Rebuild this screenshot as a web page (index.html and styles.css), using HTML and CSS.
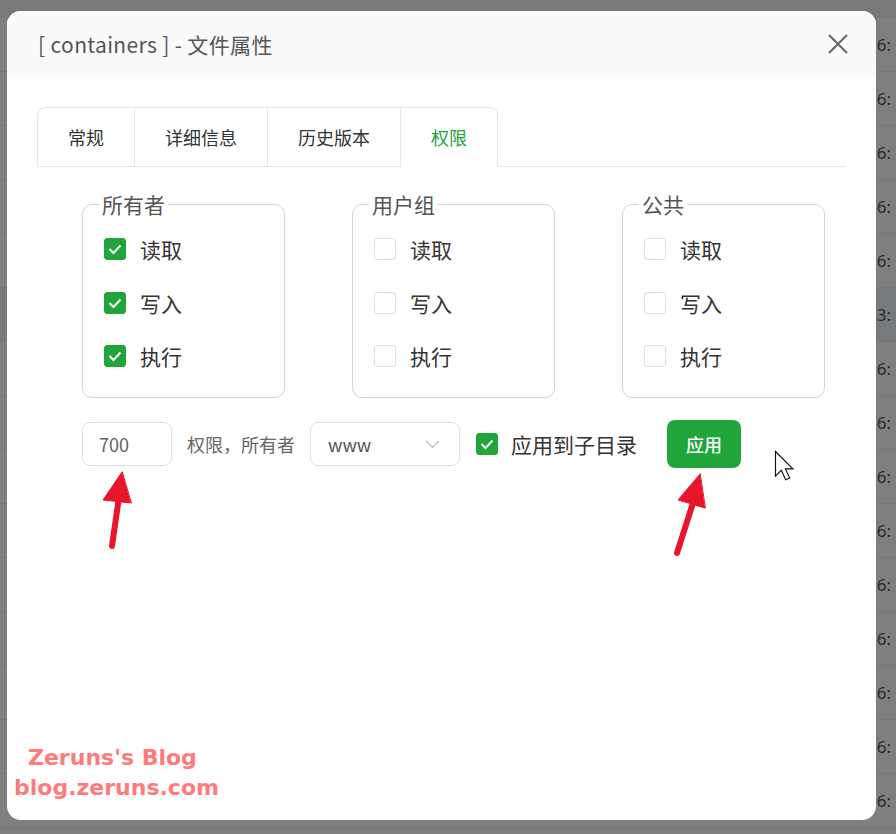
FILE: index.html
```html
<!DOCTYPE html>
<html lang="zh-CN">
<head>
<meta charset="utf-8">
<title>文件属性</title>
<link rel="stylesheet" href="styles.css">
</head>
<body>
<div class="bg-table">
  <div class="bg-row bg-head"></div>
  <div class="bg-row"><span class="bg-time">56:</span></div>
  <div class="bg-row"><span class="bg-time">56:</span></div>
  <div class="bg-row"><span class="bg-time">56:</span></div>
  <div class="bg-row"><span class="bg-time">56:</span></div>
  <div class="bg-row"><span class="bg-time">56:</span></div>
  <div class="bg-row bg-hover"><span class="bg-time">43:</span></div>
  <div class="bg-row"><span class="bg-time">56:</span></div>
  <div class="bg-row"><span class="bg-time">56:</span></div>
  <div class="bg-row"><span class="bg-time">56:</span></div>
  <div class="bg-row"><span class="bg-time">56:</span></div>
  <div class="bg-row"><span class="bg-time">56:</span></div>
  <div class="bg-row"><span class="bg-time">56:</span></div>
  <div class="bg-row"><span class="bg-time">56:</span></div>
  <div class="bg-row"><span class="bg-time">56:</span></div>
  <div class="bg-row"><span class="bg-time">56:</span></div>
</div>
<div class="mask"></div>

<div class="dialog">
  <div class="dlg-head">
    <span class="dlg-title">[ containers ] - 文件属性</span>
    <span class="dlg-close">
      <svg width="20" height="20" viewBox="0 0 20 20"><path d="M1 1 L19 19 M19 1 L1 19" stroke="#666" stroke-width="2" fill="none"/></svg>
    </span>
  </div>
  <div class="dlg-body">
    <div class="tabs">
      <div class="tab-list">
        <div class="tab">常规</div>
        <div class="tab">详细信息</div>
        <div class="tab">历史版本</div>
        <div class="tab active">权限</div>
      </div>
    </div>

    <div class="perm-groups">
      <fieldset class="perm-box">
        <legend>所有者</legend>
        <div class="ck-row"><span class="ck on"><svg viewBox="0 0 22 22"><path d="M5.5 11 L9.5 15 L16.5 7.5" stroke="#fff" stroke-width="2" fill="none"/></svg></span><span class="ck-label">读取</span></div>
        <div class="ck-row"><span class="ck on"><svg viewBox="0 0 22 22"><path d="M5.5 11 L9.5 15 L16.5 7.5" stroke="#fff" stroke-width="2" fill="none"/></svg></span><span class="ck-label">写入</span></div>
        <div class="ck-row"><span class="ck on"><svg viewBox="0 0 22 22"><path d="M5.5 11 L9.5 15 L16.5 7.5" stroke="#fff" stroke-width="2" fill="none"/></svg></span><span class="ck-label">执行</span></div>
      </fieldset>
      <fieldset class="perm-box">
        <legend>用户组</legend>
        <div class="ck-row"><span class="ck"></span><span class="ck-label">读取</span></div>
        <div class="ck-row"><span class="ck"></span><span class="ck-label">写入</span></div>
        <div class="ck-row"><span class="ck"></span><span class="ck-label">执行</span></div>
      </fieldset>
      <fieldset class="perm-box">
        <legend>公共</legend>
        <div class="ck-row"><span class="ck"></span><span class="ck-label">读取</span></div>
        <div class="ck-row"><span class="ck"></span><span class="ck-label">写入</span></div>
        <div class="ck-row"><span class="ck"></span><span class="ck-label">执行</span></div>
      </fieldset>
    </div>

    <div class="perm-row">
      <div class="num-input">700</div>
      <span class="owner-label">权限，所有者</span>
      <div class="select">
        <span>www</span>
        <svg width="15" height="9" viewBox="0 0 15 9"><path d="M1 1 L7.5 7.5 L14 1" stroke="#bbb" stroke-width="1.2" fill="none"/></svg>
      </div>
      <div class="ck-row sub">
        <span class="ck on"><svg viewBox="0 0 22 22"><path d="M5.5 11 L9.5 15 L16.5 7.5" stroke="#fff" stroke-width="2" fill="none"/></svg></span><span class="ck-label">应用到子目录</span>
      </div>
      <button class="btn-apply">应用</button>
    </div>
  </div>
  <div class="watermark">
    <div class="wm-1">Zeruns's Blog</div>
    <div class="wm-2">blog.zeruns.com</div>
  </div>
</div>

<svg class="annot" width="896" height="834" viewBox="0 0 896 834">
  <g fill="#e8162b" stroke="#e8162b" stroke-linecap="round" stroke-linejoin="round">
    <path d="M112 546 L119 497" stroke-width="6" fill="none"/>
    <path d="M122 472 L103 500 L131 503 Z" stroke-width="1"/>
    <path d="M677 553 L693 503" stroke-width="6" fill="none"/>
    <path d="M700 474 L678 500 L705 508 Z" stroke-width="1"/>
  </g>
  <path transform="translate(775.5 451.5) scale(1.45)" d="M0 0 V17 L4 13 L7 19.5 L9.8 18.3 L6.8 12 H12 Z" fill="#fff" stroke="#111" stroke-width="0.8" stroke-linejoin="miter"/>
</svg>
</body>
</html>
```

FILE: styles.css
```css
* { box-sizing: border-box; }
html, body { margin: 0; padding: 0; }
body {
  width: 896px;
  height: 834px;
  overflow: hidden;
  background: #fff;
  font-family: "Noto Sans CJK SC", "Noto Sans", sans-serif;
  position: relative;
}

/* background page */
.bg-table { width: 896px; }
.bg-row {
  height: 54px;
  border-bottom: 1px solid #ebeef3;
  font-size: 17px;
  line-height: 53px;
  color: #555;
  padding-left: 867px;
  white-space: nowrap;
  overflow: hidden;
  font-family: "Noto Sans", sans-serif;
}
.bg-head { height: 18px; background: #f3f3f3; }
.bg-hover { background: #eef4fa; }

.mask {
  position: absolute;
  inset: 0;
  background: rgba(0, 0, 0, 0.5);
}

/* dialog */
.dialog {
  position: absolute;
  left: 7px;
  top: 11px;
  width: 869px;
  height: 809px;
  background: #fff;
  border-radius: 14px;
  overflow: hidden;
}
.dlg-head {
  height: 66px;
  background: #fafafa;
  display: flex;
  align-items: center;
  justify-content: space-between;
  padding: 0 28px 0 31px;
}
.dlg-title {
  font-size: 21px;
  letter-spacing: 0.35px;
  color: #555;
}
.dlg-close { display: flex; }

.dlg-body { padding: 30px 30px 0 30px; }

.tabs {
  display: flex;
  border-bottom: 1px solid #e4e7ed;
}
.tab-list {
  display: flex;
  border: 1px solid #e4e7ed;
  border-bottom: 0;
  border-radius: 8px 8px 0 0;
  margin-bottom: -1px;
}
.tab {
  height: 59px;
  line-height: 58px;
  padding: 0 30px;
  font-size: 18px;
  color: #333;
  border-right: 1px solid #e4e7ed;
  border-bottom: 1px solid #e4e7ed;
}
.tab:last-child { border-right: 0; }
.tab.active { color: #20a53a; border-bottom-color: #fff; }

.perm-groups {
  display: flex;
  gap: 67px;
  padding-left: 45px;
  margin-top: 25px;
}
.perm-box {
  width: 203px;
  margin: 0;
  border: 1px solid #d3d5da;
  border-radius: 10px;
  padding: 0 0 26px 21px;
  min-width: 0;
}
.perm-box legend {
  font-size: 21px;
  line-height: 24px;
  color: #555;
  padding: 0 3px;
  margin-left: -5px;
}
.ck-row {
  display: flex;
  align-items: center;
  gap: 14px;
  height: 30px;
  margin-top: 23.5px;
}
.perm-box legend + .ck-row { margin-top: 18px; }
.ck {
  width: 22px;
  height: 22px;
  border-radius: 3px;
  border: 1px solid #dcdfe6;
  background: #fff;
  display: flex;
  flex: none;
  overflow: hidden;
}
.ck.on { background: #20a53a; border-color: #20a53a; }
.ck svg { width: 22px; height: 22px; margin: -1px; flex: none; }
.ck-label { font-size: 21px; color: #333; }

.perm-row {
  display: flex;
  align-items: center;
  padding-left: 45px;
  margin-top: 22px;
  height: 48px;
}
.num-input {
  width: 90px;
  height: 44px;
  border: 1px solid #dcdfe6;
  border-radius: 8px;
  padding-left: 16px;
  font-size: 18px;
  line-height: 42px;
  color: #606266;
}
.owner-label {
  margin-left: 15px;
  font-size: 18px;
  color: #666;
}
.select {
  margin-left: 15px;
  width: 150px;
  height: 44px;
  border: 1px solid #dcdfe6;
  border-radius: 8px;
  padding: 0 19px 0 17px;
  display: flex;
  align-items: center;
  justify-content: space-between;
  font-size: 18px;
  color: #555;
}
.ck-row.sub { margin: 0 0 0 16px; gap: 13px; }
.btn-apply {
  margin-left: 30px;
  width: 74px;
  height: 48px;
  border: 0;
  border-radius: 8px;
  background: #20a53a;
  color: #fff;
  font-family: inherit;
  font-size: 18px;
  font-weight: 500;
  padding: 0;
}

.watermark {
  position: absolute;
  left: 7px;
  top: 732px;
  font-family: "DejaVu Sans", sans-serif;
  font-weight: bold;
  font-size: 22px;
  line-height: 30px;
  color: #ff7b7b;
  white-space: nowrap;
}
.wm-1 { padding-left: 14px; }

.annot {
  position: absolute;
  left: 0;
  top: 0;
  pointer-events: none;
}
```
